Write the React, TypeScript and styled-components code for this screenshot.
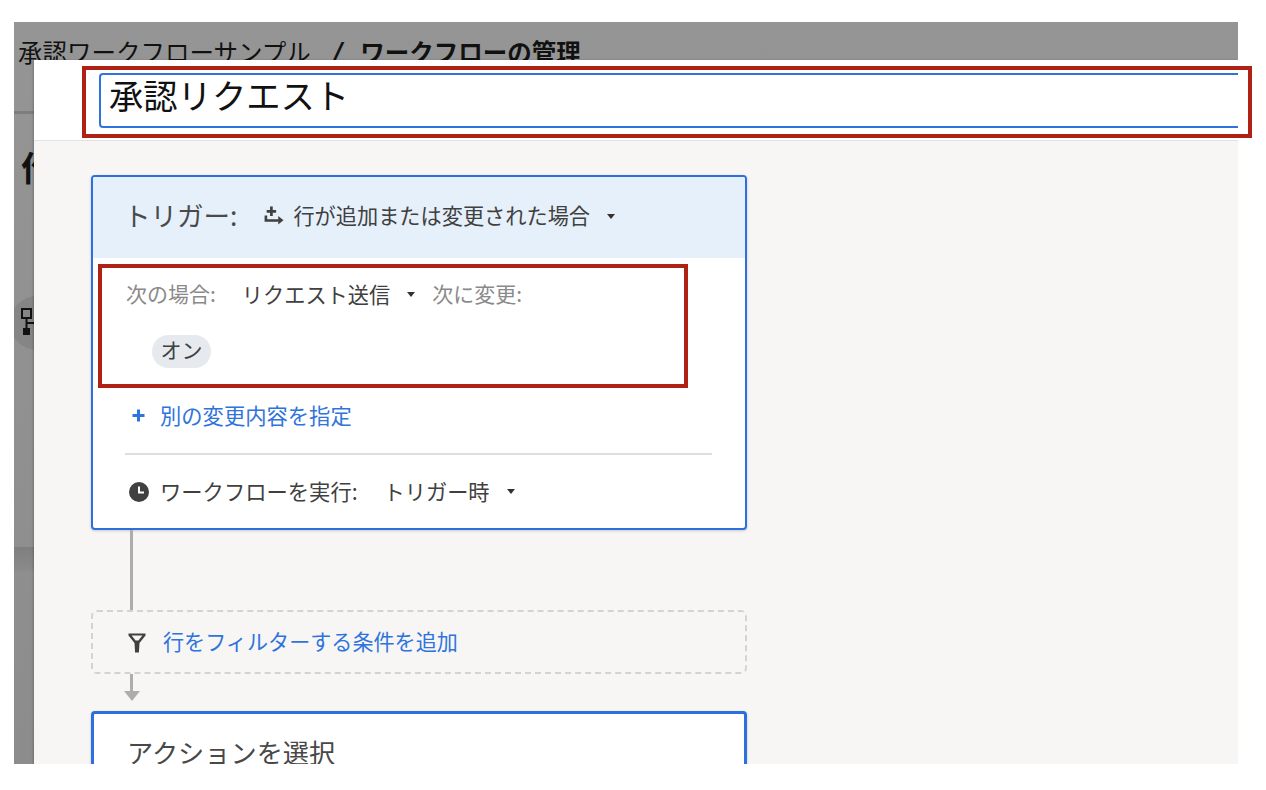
import React from "react";
import styled, { createGlobalStyle } from "styled-components";

const GlobalStyle = createGlobalStyle`
  html, body {
    margin: 0;
    padding: 0;
    background: #fff;
    font-family: "Noto Sans CJK JP", "Noto Sans", sans-serif;
  }
`;

const Screen = styled.div`
  position: relative;
  width: 1266px;
  height: 790px;
  overflow: hidden;
  padding: 22px 28px 26px 14px;
  box-sizing: border-box;
`;

const Stage = styled.div`
  position: relative;
  width: 1224px;
  height: 742px;
  overflow: hidden;
  background: linear-gradient(180deg, #959595 0%, #8c8c8c 100%);
`;

const BackHeader = styled.div`
  height: 92px;
  padding: 12px 0 0 4px;
  box-sizing: border-box;
  border-bottom: 3px solid #7d7d7d;
  font-size: 24.5px;
  line-height: 36px;
  color: #111;
  white-space: nowrap;
`;

const Crumb = styled.span`
  font-weight: 400;
`;

const CrumbSep = styled.span`
  font-weight: 900;
  font-style: italic;
  margin: 0 20px;
`;

const CrumbCurrent = styled.span`
  font-weight: 700;
`;

const BackTitle = styled.div`
  margin: 29px 0 0 7px;
  font-size: 34px;
  line-height: 48px;
  font-weight: 700;
  color: #111;
`;

const BackBadge = styled.div`
  margin: 105px 0 0 -4px;
  width: 54px;
  height: 54px;
  border-radius: 50%;
  background: #858585;
  display: flex;
  align-items: center;
  padding-left: 11px;
  box-sizing: border-box;
`;

const BackRule = styled.div`
  margin-top: 197px;
  height: 24px;
  background: linear-gradient(180deg, #7f7f7f 0%, #8b8b8b 100%);
`;

const Modal = styled.div`
  position: absolute;
  left: 20px;
  top: 38px;
  right: 0;
  bottom: 0;
  overflow: hidden;
  background: #f7f6f5;
  box-shadow: -1px 0 2px rgba(0, 0, 0, 0.2);
`;

const ModalHeader = styled.div`
  height: 81px;
  padding: 13px 0 0 65px;
  box-sizing: border-box;
  background: #fff;
  border-bottom: 1px solid #e2e2e2;
`;

const NameInput = styled.input`
  display: block;
  width: 1220px;
  height: 55px;
  padding: 0 8px 13px;
  box-sizing: border-box;
  border: 2px solid #2f74dc;
  border-radius: 4px;
  outline: none;
  background: #fff;
  color: #111;
  font-family: inherit;
  font-size: 34.3px;
`;

const ModalBody = styled.div`
  padding: 34px 0 0 57px;
`;

const Card = styled.div<{ $thick?: boolean }>`
  width: 656px;
  box-sizing: border-box;
  background: #fff;
  border: ${(p) => (p.$thick ? "3px" : "2px")} solid #2d6fdf;
  border-radius: 4px;
  box-shadow: 0 1px 3px rgba(0, 0, 0, 0.18);
  overflow: hidden;
`;

const TriggerHead = styled.div`
  height: 81px;
  display: flex;
  align-items: center;
  padding: 0 0 6px 31px;
  box-sizing: border-box;
  background: #e6f0fa;
  color: #474747;
`;

const TriggerLabel = styled.span`
  font-size: 26.5px;
  margin-right: 26px;
  color: #4a4a4a;
`;

const Dropdown = styled.span<{ $gap?: number }>`
  display: inline-flex;
  align-items: center;
  font-size: 21.2px;
  color: #404040;
  white-space: nowrap;
  &::after {
    content: "";
    margin: 3px 0 0 ${(p) => p.$gap ?? 17}px;
    border-left: 4.5px solid transparent;
    border-right: 4.5px solid transparent;
    border-top: 5.5px solid #333;
  }
`;

const IconSlot = styled.span<{ $gap: number; $drop?: number }>`
  display: inline-flex;
  align-items: center;
  margin-top: ${(p) => p.$drop ?? 0}px;
  margin-right: ${(p) => p.$gap}px;
`;

const CardBody = styled.div`
  padding: 0 32px;
`;

const ConditionRow = styled.div`
  display: flex;
  align-items: center;
  height: 36px;
  margin: 17px 0 0 1px;
`;

const MutedLabel = styled.span<{ $gap?: number; $lead?: number }>`
  font-size: 21px;
  color: #8a8a8a;
  margin-left: ${(p) => p.$lead ?? 0}px;
  margin-right: ${(p) => p.$gap ?? 0}px;
  white-space: nowrap;
`;

const Chip = styled.span`
  display: inline-flex;
  align-items: center;
  justify-content: center;
  width: 59px;
  height: 33px;
  padding-bottom: 5px;
  box-sizing: border-box;
  margin: 24px 0 0 27px;
  border-radius: 17px;
  background: #e6eaee;
  color: #404040;
  font-size: 21px;
`;

const ChipRow = styled.div`
  display: flex;
`;

const AddLink = styled.div`
  display: flex;
  align-items: center;
  height: 32px;
  margin: 30px 0 0 7px;
  color: #2f74dc;
  font-size: 21.3px;
`;

const Divider = styled.div`
  height: 2px;
  margin: 23px 1px 0 0;
  background: #dedede;
`;

const RunRow = styled.div`
  display: flex;
  align-items: center;
  height: 36px;
  margin: 17px 0 20px 4px;
`;

const RunLabel = styled.span`
  font-size: 21.3px;
  color: #404040;
  margin: 0 26px 0 3px;
  white-space: nowrap;
`;

const Line = styled.div<{ $height: number }>`
  width: 3px;
  height: ${(p) => p.$height}px;
  margin-left: 39px;
  background: #adadad;
`;

const ArrowHead = styled.div`
  width: 0;
  margin: 0 0 10px 33px;
  border-left: 8px solid transparent;
  border-right: 8px solid transparent;
  border-top: 10px solid #adadad;
`;

const ConditionBox = styled.div`
  width: 656px;
  height: 64px;
  box-sizing: border-box;
  display: flex;
  align-items: center;
  padding: 0 0 2px 35px;
  border: 2px dashed #d3d3d3;
  border-radius: 6px;
  color: #2f74dc;
  font-size: 21.1px;
  white-space: nowrap;
`;

const ActionTitle = styled.div`
  padding: 18px 0 60px 33px;
  font-size: 26.2px;
  line-height: 40px;
  color: #484848;
`;

const RedFrame = styled.div<{ $x: number; $y: number; $w: number; $h: number }>`
  position: absolute;
  left: ${(p) => p.$x}px;
  top: ${(p) => p.$y}px;
  width: ${(p) => p.$w}px;
  height: ${(p) => p.$h}px;
  box-sizing: border-box;
  border: 4px solid #ae2216;
  pointer-events: none;
`;

function WorkflowIcon() {
  return (
    <svg width="16" height="30" viewBox="0 0 16 30">
      <rect x="1" y="1" width="9" height="9" fill="none" stroke="#111" strokeWidth="2" />
      <path d="M5.5 10v10M5.5 15H16" stroke="#111" strokeWidth="2" fill="none" />
      <rect x="2" y="20" width="7" height="7" fill="#111" />
    </svg>
  );
}

function RowChangeIcon() {
  return (
    <svg width="21" height="21" viewBox="0 0 20 20">
      <path d="M6.7 1.5h2.6v3.2h3.2v2.6H9.3v3.2H6.7V7.3H3.5V4.7h3.2z" fill="#404040" />
      <path d="M1.5 10H4v3.5h11V16H1.5z" fill="#404040" />
      <path d="M14.5 10.5l5 4-5 4z" fill="#404040" />
    </svg>
  );
}

function ClockIcon() {
  return (
    <svg width="20" height="20" viewBox="0 0 20 20">
      <circle cx="10" cy="10" r="10" fill="#404040" />
      <path d="M10 4.5v6h5" fill="none" stroke="#fff" strokeWidth="2" />
    </svg>
  );
}

function PlusIcon() {
  return (
    <svg width="13" height="13" viewBox="0 0 13 13">
      <path d="M5 0.5h3v4.5h4.5v3H8v4.5H5V8H0.5V5H5z" fill="#2f74dc" />
    </svg>
  );
}

function FunnelIcon() {
  return (
    <svg width="18" height="20" viewBox="0 0 18 20">
      <path d="M0.5 0.5h17v2l-6 7.5-0.6 9.5H7.1L6.5 10l-6-7.5zM3.6 2.6l4 5h2.8l4-5z" fill="#404040" fillRule="evenodd" />
    </svg>
  );
}

export default function App() {
  return (
    <>
      <GlobalStyle />
      <Screen>
        <Stage>
          <BackHeader>
            <Crumb>承認ワークフローサンプル</Crumb>
            <CrumbSep>/</CrumbSep>
            <CrumbCurrent>ワークフローの管理</CrumbCurrent>
          </BackHeader>
          <BackTitle>作成</BackTitle>
          <BackBadge>
            <WorkflowIcon />
          </BackBadge>
          <BackRule />
          <Modal>
            <ModalHeader>
              <NameInput readOnly value="承認リクエスト" />
            </ModalHeader>
            <ModalBody>
              <Card>
                <TriggerHead>
                  <TriggerLabel>トリガー:</TriggerLabel>
                  <IconSlot $gap={9} $drop={2}>
                    <RowChangeIcon />
                  </IconSlot>
                  <Dropdown>行が追加または変更された場合</Dropdown>
                </TriggerHead>
                <CardBody>
                  <ConditionRow>
                    <MutedLabel $gap={26}>次の場合:</MutedLabel>
                    <Dropdown>リクエスト送信</Dropdown>
                    <MutedLabel $lead={17}>次に変更:</MutedLabel>
                  </ConditionRow>
                  <ChipRow>
                    <Chip>オン</Chip>
                  </ChipRow>
                  <AddLink>
                    <IconSlot $gap={15} $drop={2}>
                      <PlusIcon />
                    </IconSlot>
                    別の変更内容を指定
                  </AddLink>
                  <Divider />
                  <RunRow>
                    <IconSlot $gap={8} $drop={3}>
                      <ClockIcon />
                    </IconSlot>
                    <RunLabel>ワークフローを実行:</RunLabel>
                    <Dropdown>トリガー時</Dropdown>
                  </RunRow>
                </CardBody>
              </Card>
              <Line $height={80} />
              <ConditionBox>
                <IconSlot $gap={17} $drop={3}>
                  <FunnelIcon />
                </IconSlot>
                行をフィルターする条件を追加
              </ConditionBox>
              <Line $height={17} />
              <ArrowHead />
              <Card $thick>
                <ActionTitle>アクションを選択</ActionTitle>
              </Card>
            </ModalBody>
          </Modal>
        </Stage>
        <RedFrame $x={82} $y={66} $w={1170} $h={72} />
        <RedFrame $x={98} $y={264} $w={590} $h={124} />
      </Screen>
    </>
  );
}
